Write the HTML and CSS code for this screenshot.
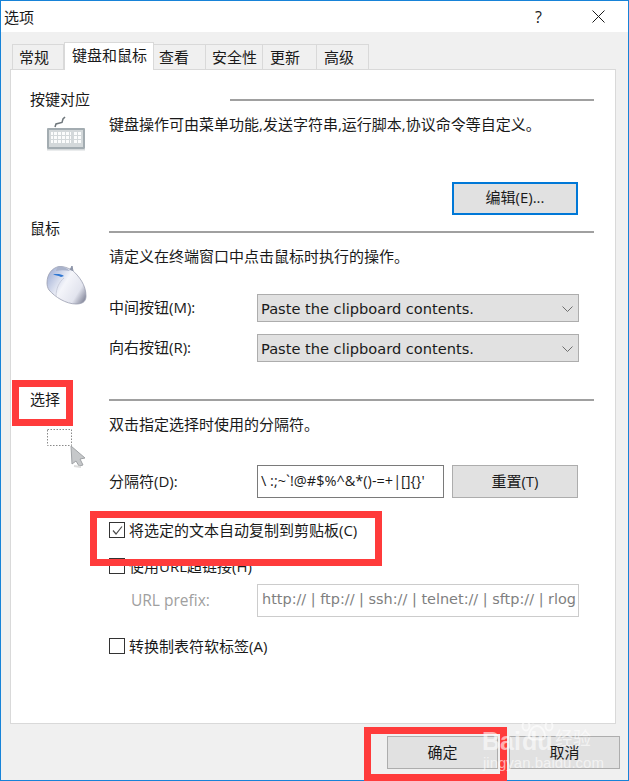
FILE: index.html
```html
<!DOCTYPE html>
<html>
  <head>
    <title>选项</title>
    <link rel="stylesheet" href="styles.css">
  </head>
  <body>
    <div class="window">
      <div class="title-bar">
        <span class="title">选项</span>
        <span class="help">?</span>
        <svg class="close" width="13" height="13" viewBox="0 0 13 13">
          <path d="M0.5 0.5L12.5 12.5M12.5 0.5L0.5 12.5" stroke="#1a1a1a" stroke-width="1" fill="none"/>
        </svg>
      </div>

      <div class="tabs">
        <div class="tab tab-general">常规</div>
        <div class="tab tab-keys active">键盘和鼠标</div>
        <div class="tab tab-view">查看</div>
        <div class="tab tab-security">安全性</div>
        <div class="tab tab-update">更新</div>
        <div class="tab tab-advanced">高级</div>
      </div>

      <div class="panel">
        <div class="section-head">
          <span class="section-title keys-title">按键对应</span>
          <span class="rule"></span>
        </div>
        <div class="section-body">
          <div class="icon-col keys-icon">
            <svg width="40" height="36" viewBox="0 0 40 36">
              <defs>
                <pattern id="keyGrid" width="4" height="4" patternUnits="userSpaceOnUse">
                  <rect width="3" height="3" fill="#fbfcfc"/>
                </pattern>
              </defs>
              <path d="M9 11L10 8L16 6.500L17 3L19 1" stroke="#6f777c" stroke-width="1.500" fill="none"/>
              <rect x="1" y="12" width="38" height="21" rx="1" fill="#a3acb1"/>
              <rect x="1" y="33" width="38" height="1.500" fill="#d5d9db"/>
              <rect x="3" y="14" width="34" height="17" fill="#d3d8da"/>
              <rect x="5" y="16" width="20" height="12" fill="url(#keyGrid)"/>
              <rect x="28" y="16" width="7" height="12" fill="url(#keyGrid)"/>
            </svg>
          </div>
          <div class="content-col">
            <div class="text-line">键盘操作可由菜单功能,发送字符串,运行脚本,协议命令等自定义。</div>
            <div class="edit-row">
              <div class="btn btn-focus">编辑(E)...</div>
            </div>
          </div>
        </div>

        <div class="section-head mouse-head">
          <span class="section-title">鼠标</span>
          <span class="rule rule-low"></span>
        </div>
        <div class="section-body mouse-body">
          <div class="icon-col mouse-icon">
            <svg width="41" height="40" viewBox="0 0 41 40">
              <defs>
                <linearGradient id="mouseFill" x1="0" y1="0.2" x2="1" y2="0.8">
                  <stop offset="0" stop-color="#a3b1d6"/>
                  <stop offset="0.45" stop-color="#f4f5fa"/>
                  <stop offset="0.8" stop-color="#e2e4ee"/>
                  <stop offset="1" stop-color="#8f92a4"/>
                </linearGradient>
              </defs>
              <path d="M1 18C1 9 6 3 13 1.500C17 1 22 3 26 5C33 11 40 20 40 31C40 37 36 39 30 39C20 39 9 32 3 25C1.500 23 1 20 1 18Z" fill="url(#mouseFill)" stroke="#9a9eb0" stroke-width="0.800"/>
              <path d="M24 5L26 1L27 6" fill="#8d94a8" stroke="#8d94a8" stroke-width="1"/>
              <path d="M11 2C15 0.500 21 3 24 6C19 5 14 5 10 6Z" fill="#aab3cb"/>
              <path d="M7 9.500C11 8.500 15 9 18 11L15 12C12 10.500 9 10 7 9.500Z" fill="#2f77d2"/>
              <path d="M18 13C13 17 10 24 10 31" stroke="#c3c7d6" stroke-width="0.800" fill="none"/>
            </svg>
          </div>
          <div class="content-col">
            <div class="text-line">请定义在终端窗口中点击鼠标时执行的操作。</div>
            <div class="field-row first-select">
              <span class="field-label">中间按钮(M):</span>
              <div class="select">
                <span>Paste the clipboard contents.</span>
                <svg width="11" height="6" viewBox="0 0 11 6"><path d="M0.500 0.500L5.500 5.500L10.500 0.500" stroke="#6e6e6e" fill="none"/></svg>
              </div>
            </div>
            <div class="field-row second-select">
              <span class="field-label">向右按钮(R):</span>
              <div class="select">
                <span>Paste the clipboard contents.</span>
                <svg width="11" height="6" viewBox="0 0 11 6"><path d="M0.500 0.500L5.500 5.500L10.500 0.500" stroke="#6e6e6e" fill="none"/></svg>
              </div>
            </div>
          </div>
        </div>

        <div class="section-head select-head">
          <span class="section-title">选择</span>
          <span class="rule"></span>
        </div>
        <div class="section-body">
          <div class="icon-col select-icon">
            <svg width="40" height="42" viewBox="0 0 40 42">
              <rect x="0.500" y="0.500" width="24" height="16" fill="none" stroke="#8a8a8a" stroke-dasharray="1.500 1.500"/>
              <path d="M24 17L38 29L33 30L36 36L32 37L29 32L25 35Z" fill="#c6c8ca" stroke="#a0a3a6" stroke-width="1"/>
              <path d="M27 37L34 38" stroke="#dcdcdc" stroke-width="2"/>
            </svg>
          </div>
          <div class="content-col">
            <div class="text-line">双击指定选择时使用的分隔符。</div>
            <div class="field-row sep-row">
              <span class="field-label">分隔符(D):</span>
              <div class="input sep-input">\ :;~`!@#$%^&amp;*()-=+|[]{}'</div>
              <div class="btn reset-btn">重置(T)</div>
            </div>
            <div class="check-row copy-check">
              <span class="checkbox">
                <svg width="13" height="13" viewBox="0 0 13 13"><path d="M2 6.500L5 10L11 2.500" stroke="#4d4d4d" stroke-width="1.200" fill="none"/></svg>
              </span>
              <span>将选定的文本自动复制到剪贴板(C)</span>
            </div>
            <div class="check-row url-check">
              <span class="checkbox"></span>
              <span>使用URL超链接(H)</span>
            </div>
            <div class="field-row url-row">
              <span class="field-label url-label">URL prefix:</span>
              <div class="input url-input">http:// | ftp:// | ssh:// | telnet:// | sftp:// | rlog</div>
            </div>
            <div class="check-row tab-check">
              <span class="checkbox"></span>
              <span>转换制表符软标签(A)</span>
            </div>
          </div>
        </div>
      </div>

      <div class="footer">
        <div class="btn footer-btn">确定</div>
        <div class="btn footer-btn">取消</div>
      </div>
    </div>

    <div class="mark mark-select"></div>
    <div class="mark mark-copy"></div>
    <div class="mark mark-ok"></div>

    <div class="watermark">
      <svg class="paw" width="34" height="31" viewBox="0 0 34 31">
        <g fill="none" stroke="#fff" stroke-width="2" opacity="0.6">
          <ellipse cx="6" cy="14" rx="3.500" ry="4.500"/>
          <ellipse cx="13" cy="6" rx="3.500" ry="4.500"/>
          <ellipse cx="22" cy="6" rx="3.500" ry="4.500"/>
          <ellipse cx="29" cy="14" rx="3.500" ry="4.500"/>
          <path d="M17 14C12 14 9 20 9 24C9 28 13 28 17 27C21 28 25 28 25 24C25 20 22 14 17 14Z"/>
        </g>
      </svg>
      <span class="wm-bai">Bai</span>
      <span class="wm-du">du</span>
      <span class="wm-jy">经验</span>
      <span class="wm-url">jingyan.baidu.com</span>
    </div>
  </body>
</html>
```

FILE: styles.css
```css
* {
  box-sizing: border-box;
}

body {
  margin: 0;
  width: 629px;
  height: 781px;
  overflow: hidden;
  position: relative;
  background-color: #f0f0f0;
  color: #1a1a1a;
  font-family: "Open Sans", "Noto Sans CJK SC", sans-serif;
  font-size: 15px;
  line-height: 20px;
}

.window {
  width: 629px;
  height: 781px;
  border: 1px solid #1783d8;
  background-color: #f0f0f0;
}

.title-bar {
  height: 31px;
  background-color: #fff;
  display: flex;
  align-items: center;
  padding-left: 3px;
}

.title {
  flex: 1;
}

.help {
  font-size: 16px;
  margin-right: 50px;
}

.close {
  margin-right: 23px;
}

/* tabs */
.tabs {
  display: flex;
  align-items: flex-end;
  height: 37px;
  padding-left: 11px;
}

.tab {
  height: 25px;
  border: 1px solid #d9d9d9;
  border-left: 0;
  border-bottom: 0;
  padding-left: 7px;
  line-height: 24px;
}

.tab-general {
  width: 52px;
  border-left: 1px solid #d9d9d9;
  padding-left: 6px;
}

.tab-keys {
  width: 90px;
}

.tab-view {
  width: 52px;
  padding-left: 5px;
}

.tab-security {
  width: 57px;
  padding-left: 6px;
}

.tab-update {
  width: 54px;
}

.tab-advanced {
  width: 52px;
}

.tab.active {
  height: 28px;
  line-height: 25px;
  background-color: #fff;
  border-left: 1px solid #d9d9d9;
  margin-bottom: -1px;
  position: relative;
}

/* panel */
.panel {
  margin-left: 9px;
  width: 606px;
  height: 655px;
  border: 1px solid #d9d9d9;
  background-color: #fff;
  padding: 20px 21px 0 19px;
}

.section-head {
  display: flex;
  align-items: center;
  height: 20px;
}

.section-title {
  width: 79px;
  flex: none;
  height: 20px;
  line-height: 18px;
}

.keys-title {
  width: 200px;
}

.rule {
  flex: 1;
  height: 2px;
  background-color: #a0a0a0;
}

.rule-low {
  margin-top: 6px;
}

.mouse-head {
  margin-top: 4px;
}

.select-head {
  margin-top: 28px;
}

.section-body {
  display: flex;
  margin-top: 5px;
}

.mouse-body {
  margin-top: 8px;
}

.icon-col {
  width: 79px;
  flex: none;
  padding-left: 16px;
}

.keys-icon {
  padding-top: 1px;
}

.mouse-icon {
  padding-top: 18px;
}

.select-icon {
  padding-left: 17px;
  padding-top: 14px;
}

.content-col {
  flex: 1;
}

.text-line {
  height: 20px;
  line-height: 18px;
}

.edit-row {
  display: flex;
  justify-content: flex-end;
  margin-top: 47px;
  padding-right: 16px;
}

/* buttons */
.btn {
  display: flex;
  align-items: center;
  justify-content: center;
  background-color: #e1e1e1;
  border: 1px solid #adadad;
  padding-bottom: 2px;
}

.btn-focus {
  width: 126px;
  height: 33px;
  border: 2px solid #0078d7;
  padding-bottom: 3px;
}

.reset-btn {
  width: 126px;
  height: 33px;
  margin-left: 8px;
}

/* form rows */
.field-row {
  display: flex;
  align-items: center;
}

.field-label {
  width: 148px;
  flex: none;
  padding-bottom: 2px;
}

.first-select {
  margin-top: 27px;
}

.second-select {
  margin-top: 12px;
}

.select {
  width: 322px;
  height: 28px;
  background-color: #e1e1e1;
  border: 1px solid #adadad;
  display: flex;
  align-items: center;
  justify-content: space-between;
  padding: 1px 5px 0 3px;
  font-family: "DejaVu Sans", sans-serif;
  font-size: 14.6px;
}

.input {
  height: 33px;
  line-height: 29px;
  background-color: #fff;
  border: 1px solid #7a7a7a;
  padding-left: 3px;
  overflow: hidden;
  white-space: nowrap;
}

.sep-row {
  margin-top: 30px;
}

.sep-input {
  width: 187px;
  font-size: 14.5px;
}

.url-input {
  width: 322px;
  border-color: #cccccc;
  color: #7f7f7f;
  padding-left: 4px;
  font-family: "DejaVu Sans", sans-serif;
  font-size: 14.45px;
}

.url-row {
  margin-top: 8px;
}

.url-label {
  padding-left: 22px;
  color: #a0a0a0;
  font-size: 15.5px;
}

.check-row {
  display: flex;
  align-items: center;
  height: 20px;
  gap: 4px;
}

.checkbox {
  width: 16px;
  height: 16px;
  flex: none;
  background-color: #fff;
  border: 1px solid #333;
  display: flex;
  align-items: center;
  justify-content: center;
}

.copy-check {
  margin-top: 22px;
}

.url-check {
  margin-top: 16px;
}

.tab-check {
  margin-top: 19px;
}

/* footer */
.footer {
  display: flex;
  justify-content: flex-end;
  gap: 11px;
  margin-top: 12px;
  padding-right: 8px;
}

.footer-btn {
  width: 111px;
  height: 33px;
}

/* red marks drawn over the screenshot */
.mark {
  position: absolute;
  border: 7px solid #ff3b3b;
}

.mark-select {
  left: 12px;
  top: 380px;
  width: 61px;
  height: 46px;
}

.mark-copy {
  left: 90px;
  top: 511px;
  width: 292px;
  height: 55px;
}

.mark-ok {
  left: 364px;
  top: 727px;
  width: 143px;
  height: 54px;
}

/* watermark */
.watermark {
  position: absolute;
  left: 480px;
  top: 710px;
  width: 120px;
  height: 60px;
  color: rgba(255, 255, 255, 0.6);
  font-family: "Liberation Sans", sans-serif;
}

.paw {
  position: absolute;
  left: 40px;
  top: 2px;
}

.wm-bai,
.wm-du {
  position: absolute;
  top: 16px;
  font-size: 25px;
  line-height: 30px;
  font-weight: bold;
}

.wm-bai {
  left: 2px;
}

.wm-du {
  left: 42px;
}

.wm-jy {
  position: absolute;
  left: 75px;
  top: 16px;
  font-size: 18px;
  line-height: 22px;
  font-family: "Noto Sans CJK SC", sans-serif;
}

.wm-url {
  position: absolute;
  left: 3px;
  top: 45px;
  font-size: 15px;
  line-height: 16px;
}
```
